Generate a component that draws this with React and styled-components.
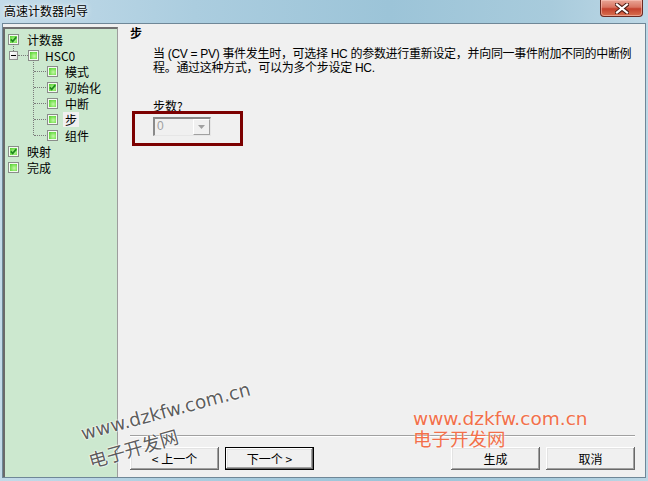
import React from 'react';
import styled, { createGlobalStyle } from 'styled-components';

const Global = createGlobalStyle`
  html, body { margin: 0; padding: 0; }
  body {
    width: 648px; height: 481px; overflow: hidden;
    font-family: "Noto Sans CJK SC", "Liberation Sans", sans-serif;
    font-size: 12px; color: #000;
  }
`;

const Window = styled.div`
  position: relative;
  width: 648px;
  height: 481px;
  display: flex;
  flex-direction: column;
  overflow: hidden;
  background: linear-gradient(to right, #c3dbe9 0%, #abcddf 30%, #9cc4d8 60%, #a8cbdc 85%, #bed8e6 100%);
`;

const TitleBar = styled.div`
  height: 23px;
  flex: none;
  display: flex;
  align-items: flex-start;
  padding-left: 4px;
`;

const TitleText = styled.div`
  line-height: 22px;
  text-shadow: 0 0 6px rgba(255, 255, 255, 0.9), 0 0 3px rgba(255, 255, 255, 0.9);
`;

const CloseButton = styled.div`
  margin-left: auto;
  margin-right: 5px;
  width: 43px;
  height: 17px;
  box-sizing: border-box;
  border: 1px solid #6b2a22;
  border-top: none;
  border-radius: 0 0 4px 4px;
  background: linear-gradient(to bottom, #e9a596 0%, #d97562 45%, #c4412d 55%, #d8704f 100%);
  box-shadow: inset 0 0 0 1px rgba(255, 210, 200, 0.5);
  display: flex;
  align-items: center;
  justify-content: center;
`;

const Client = styled.div`
  flex: 1;
  min-height: 0;
  margin: 0 2px 3px 2px;
  border: 1px solid #6f8797;
  background: #f0f0f0;
  display: flex;
`;

const TreePanel = styled.div`
  width: 115px;
  flex: none;
  box-sizing: border-box;
  margin-top: 3px;
  padding-top: 2px;
  background: #cce8cf;
  border-top: 2px solid #707070;
  border-left: 2px solid #6a6a6a;
  border-right: 1px solid #9d9d9d;
`;

const Row = styled.div`
  position: relative;
  height: 16px;
  display: flex;
  align-items: center;
  padding-left: ${p => p.$indent}px;

  ${p => p.$joinUp && `
    &::before {
      content: "";
      position: absolute;
      left: 8px;
      top: -3px;
      height: 7px;
      border-left: 1px dotted #7a7a7a;
    }
  `}

  ${p => p.$child && `
    &::before {
      content: "";
      position: absolute;
      left: 28px;
      top: -3px;
      height: ${p.$last ? 11 : 19}px;
      border-left: 1px dotted #7a7a7a;
    }
    &::after {
      content: "";
      position: absolute;
      left: 29px;
      top: 8px;
      width: 12px;
      border-top: 1px dotted #7a7a7a;
    }
  `}
`;

const Expander = styled.span`
  position: relative;
  width: 9px;
  height: 9px;
  flex: none;
  box-sizing: border-box;
  border: 1px solid #8f8f8f;
  background: linear-gradient(135deg, #ffffff, #e2e2e2);
  display: flex;
  align-items: center;
  justify-content: center;
  margin-right: 10px;

  &::before {
    content: "";
    width: 5px;
    height: 1px;
    background: #000;
  }
  &::after {
    content: "";
    position: absolute;
    left: 8px;
    top: 3px;
    width: 10px;
    border-top: 1px dotted #7a7a7a;
  }
`;

const Box = styled.span`
  width: 11px;
  height: 11px;
  flex: none;
  box-sizing: border-box;
  border: 1px solid #8a8c8a;
  background: #f4fbf0;
  padding: 1px;
  display: flex;
`;

const BoxFill = styled.span`
  flex: 1;
  background: radial-gradient(circle at 60% 60%, #c4f7a8 0%, #7fe35a 55%, #4fc62e 100%);
  display: flex;
  align-items: center;
  justify-content: center;
`;

const Label = styled.span`
  margin-left: ${p => p.$gap}px;
  padding: 0 2px;
  line-height: 15px;
  white-space: nowrap;
  background: ${p => (p.$selected ? '#f0f0f0' : 'transparent')};
`;

const Check = ({ checked }) => (
  <Box>
    <BoxFill>
      {checked && (
        <svg width="7" height="7" viewBox="0 0 7 7">
          <path d="M0.8 3.4 L2.7 5.4 L6.3 1.1" fill="none" stroke="#1f8a1f" strokeWidth="1.7" />
        </svg>
      )}
    </BoxFill>
  </Box>
);

const Main = styled.div`
  flex: 1;
  min-width: 0;
  display: flex;
  flex-direction: column;
  padding: 2px 10px 7px 12px;
`;

const Heading = styled.div`
  font-weight: bold;
  line-height: 14px;
  height: 14px;
`;

const Description = styled.div`
  margin: 7px 0 0 23px;
  font-family: "Liberation Sans", "Noto Sans CJK SC", sans-serif;
  letter-spacing: -0.3px;
  white-space: nowrap;
`;

const DescLine = styled.div`
  line-height: 14px;
  height: 14px;
`;

const FieldLabel = styled.div`
  margin: 24px 0 0 23px;
  line-height: 14px;
`;

const ComboWrap = styled.div`
  position: relative;
  margin: 4px 0 0 23px;
  width: 58px;
  height: 19px;
`;

const Combo = styled.div`
  width: 100%;
  height: 100%;
  box-sizing: border-box;
  border-style: solid;
  border-width: 2px 1px 1px 2px;
  border-color: #8a8a8a #e6e6e6 #e6e6e6 #8a8a8a;
  background: #f0f0f0;
  display: flex;
  align-items: stretch;
`;

const ComboValue = styled.div`
  flex: 1;
  padding-left: 2px;
  line-height: 15px;
  color: #a0a0a0;
  font-family: "Liberation Sans", sans-serif;
`;

const ComboArrow = styled.div`
  width: 17px;
  box-sizing: border-box;
  border-style: solid;
  border-width: 1px;
  border-color: #ffffff #a0a0a0 #a0a0a0 #ffffff;
  background: #f0f0f0;
  display: flex;
  align-items: center;
  justify-content: center;
`;

const Annotation = styled.div`
  position: absolute;
  left: -21px;
  top: -6px;
  width: 111px;
  height: 35px;
  box-sizing: border-box;
  border: 3px solid #7c0000;
  pointer-events: none;
`;

const Spacer = styled.div`
  flex: 1;
`;

const Separator = styled.div`
  height: 0;
  border-top: 1px solid #a0a0a0;
  border-bottom: 1px solid #ffffff;
  margin-bottom: 10px;
`;

const ButtonRow = styled.div`
  display: flex;
  gap: 6px;
`;

const Button = styled.button`
  width: 89px;
  height: 23px;
  box-sizing: border-box;
  padding: 0;
  margin: 0;
  font: 12px "Noto Sans CJK SC", "Liberation Sans", sans-serif;
  color: #000;
  background: #f0f0f0;
  border: ${p => (p.$default ? '1px solid #000' : 'none')};
  box-shadow: inset -1px -1px #696969, inset 1px 1px #ffffff, inset -2px -2px #a0a0a0, inset 2px 2px #e3e3e3;
  display: flex;
  align-items: center;
  justify-content: center;
  line-height: 15px;
`;

const GreyMark = styled.div`
  position: absolute;
  left: ${p => p.$x}px;
  top: ${p => p.$y}px;
  transform: rotate(${p => p.$angle}deg);
  transform-origin: left bottom;
  font: 18.5px "DejaVu Sans", "Noto Sans CJK SC", sans-serif;
  line-height: 20px;
  color: rgba(64, 64, 64, 0.85);
  text-shadow: 0 0 2px #fff, 0 0 2px #fff, 0 0 1px #fff;
  white-space: nowrap;
  pointer-events: none;
`;

const OrangeMarks = styled.div`
  position: absolute;
  left: 413px;
  top: 408px;
  display: flex;
  flex-direction: column;
  font: 18.5px "DejaVu Sans", "Noto Sans CJK SC", sans-serif;
  line-height: 21px;
  color: #f2704a;
  text-shadow: 0 0 2px rgba(255, 255, 255, 0.9);
  white-space: nowrap;
  pointer-events: none;
`;

const tree = [
  { kind: 'root', label: '计数器', checked: true },
  { kind: 'group', label: 'HSC0', checked: false },
  { kind: 'child', label: '模式', checked: false },
  { kind: 'child', label: '初始化', checked: true },
  { kind: 'child', label: '中断', checked: false },
  { kind: 'child', label: '步', checked: false, selected: true },
  { kind: 'child', label: '组件', checked: false, last: true },
  { kind: 'root', label: '映射', checked: true },
  { kind: 'root', label: '完成', checked: false },
];

const TreeItem = ({ item }) => {
  if (item.kind === 'group') {
    return (
      <Row $indent={4} $joinUp>
        <Expander />
        <Check checked={item.checked} />
        <Label $gap={4}>{item.label}</Label>
      </Row>
    );
  }
  if (item.kind === 'child') {
    return (
      <Row $indent={42} $child $last={item.last}>
        <Check checked={item.checked} />
        <Label $gap={5} $selected={item.selected}>{item.label}</Label>
      </Row>
    );
  }
  return (
    <Row $indent={3}>
      <Check checked={item.checked} />
      <Label $gap={6}>{item.label}</Label>
    </Row>
  );
};

export default function App() {
  return (
    <>
      <Global />
      <Window>
        <TitleBar>
          <TitleText>高速计数器向导</TitleText>
          <CloseButton>
            <svg width="14" height="11" viewBox="0 0 14 11">
              <path d="M2 1.5 L12 9.5 M12 1.5 L2 9.5" stroke="#4a1a12" strokeWidth="4.2" strokeLinecap="square" />
              <path d="M2 1.5 L12 9.5 M12 1.5 L2 9.5" stroke="#ffffff" strokeWidth="2.2" strokeLinecap="square" />
            </svg>
          </CloseButton>
        </TitleBar>
        <Client>
          <TreePanel>
            {tree.map((item, i) => (
              <TreeItem key={i} item={item} />
            ))}
          </TreePanel>
          <Main>
            <Heading>步</Heading>
            <Description>
              <DescLine>当 (CV = PV) 事件发生时，可选择 HC 的参数进行重新设定，并向同一事件附加不同的中断例</DescLine>
              <DescLine>程。通过这种方式，可以为多个步设定 HC.</DescLine>
            </Description>
            <FieldLabel>步数?</FieldLabel>
            <ComboWrap>
              <Combo>
                <ComboValue>0</ComboValue>
                <ComboArrow>
                  <svg width="7" height="4" viewBox="0 0 7 4">
                    <path d="M0 0 H7 L3.5 4 Z" fill="#a0a0a0" />
                  </svg>
                </ComboArrow>
              </Combo>
              <Annotation />
            </ComboWrap>
            <Spacer />
            <Separator />
            <ButtonRow>
              <Button>&lt; 上一个</Button>
              <Button $default>下一个 &gt;</Button>
              <Spacer />
              <Button>生成</Button>
              <Button>取消</Button>
            </ButtonRow>
          </Main>
        </Client>
        <GreyMark $x={84} $y={424} $angle={-15}>www.dzkfw.com.cn</GreyMark>
        <GreyMark $x={92} $y={452} $angle={-16}>电子开发网</GreyMark>
        <OrangeMarks>
          <span>www.dzkfw.com.cn</span>
          <span>电子开发网</span>
        </OrangeMarks>
      </Window>
    </>
  );
}
